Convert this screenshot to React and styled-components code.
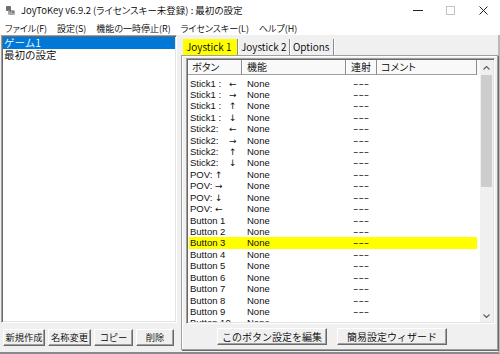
import React from "react"
import styled, { createGlobalStyle } from "styled-components"

const jp = `"Noto Sans CJK JP", "Liberation Sans", sans-serif`
const latin = `"Liberation Sans", "Noto Sans CJK JP", sans-serif`

const GlobalStyle = createGlobalStyle`
  html, body {
    margin: 0;
    padding: 0;
    background: #f0f0f0;
  }
  body {
    font-family: ${jp};
  }
`

const Window = styled.div`
  width: 500px;
  height: 354px;
  display: flex;
  flex-direction: column;
  background: #f0f0f0;
  overflow: hidden;
  font-family: ${jp};
  font-weight: 350;
  color: #000;
`

const TitleBar = styled.div`
  height: 21px;
  flex: none;
  display: flex;
  align-items: center;
  background: #fff;
  padding-left: 5px;
`

const TitleText = styled.div`
  margin-left: 5px;
  font-size: 9.5px;
  line-height: 1;
  font-feature-settings: "palt";
  white-space: nowrap;
`

const WindowControls = styled.div`
  margin-left: auto;
  display: flex;
  height: 100%;
`

const ControlButton = styled.div`
  width: 33px;
  display: flex;
  align-items: center;
  justify-content: center;
`

const MenuBar = styled.div`
  height: 14px;
  flex: none;
  display: flex;
  align-items: center;
  gap: 10px;
  padding-left: 5px;
  background: #fff;
`

const MenuItem = styled.span`
  font-size: 9px;
  line-height: 1;
  font-feature-settings: "palt";
  white-space: nowrap;
`

const Client = styled.div`
  flex: 1;
  display: flex;
  border-right: 2px solid #b9b9b9;
  border-bottom: 2px solid #8a8a8a;
  min-height: 0;
`

const LeftPane = styled.div`
  width: 176px;
  margin-left: 1px;
  display: flex;
  flex-direction: column;
`

const ListBox = styled.div`
  flex: 1;
  background: #fff;
  border: 1px solid;
  border-color: #a0a0a0 #fff #fff #a0a0a0;
  box-shadow: inset 1px 1px 0 #696969, inset -1px -1px 0 #e3e3e3;
  padding: 1px;
`

const ListItem = styled.div`
  height: 11.5px;
  padding-left: 1px;
  font-size: 10.5px;
  line-height: 11.5px;
  white-space: nowrap;
  background: ${p => (p.$selected ? "#0078d7" : "transparent")};
  color: ${p => (p.$selected ? "#fff" : "#000")};
`

const ButtonBar = styled.div`
  height: ${p => p.$h}px;
  flex: none;
  display: flex;
  align-items: center;
  gap: ${p => p.$gap}px;
  padding-left: ${p => p.$pl}px;
`

const PushButton = styled.div`
  width: ${p => p.$w}px;
  height: 17.5px;
  box-sizing: border-box;
  display: flex;
  align-items: center;
  justify-content: center;
  background: #f0f0f0;
  border: 1px solid;
  border-color: #fff #696969 #696969 #fff;
  box-shadow: inset -1px -1px 0 #a0a0a0;
  font-size: ${p => p.$fs}px;
  line-height: 1;
  white-space: nowrap;
`

const RightPane = styled.div`
  flex: 1;
  margin-left: 4px;
  padding: 4px 0 2px;
  display: flex;
  flex-direction: column;
  min-width: 0;
`

const TabStrip = styled.div`
  height: 16px;
  flex: none;
  display: flex;
  padding-left: 2px;
`

const Tab = styled.div`
  width: ${p => p.$w}px;
  box-sizing: border-box;
  padding-left: 3px;
  font-size: 10px;
  line-height: 16px;
  white-space: nowrap;
  background: ${p => (p.$active ? "#ffff00" : "transparent")};
  border-right: 1px solid #8c8c8c;
  box-shadow: 1px 0 0 #fff;
`

const TabPanel = styled.div`
  flex: 1;
  display: flex;
  flex-direction: column;
  border: 1px solid #a0a0a0;
  box-shadow: inset 1px 1px 0 #fff, 1px 1px 0 #696969;
  padding: 2px 2px 0 4px;
  min-height: 0;
`

const ListView = styled.div`
  flex: 1;
  display: flex;
  min-height: 0;
  background: #fff;
  border: 1px solid;
  border-color: #a0a0a0 #fff #fff #a0a0a0;
  box-shadow: inset 1px 1px 0 #696969, inset -1px -1px 0 #e3e3e3;
  padding: 1px;
`

const Table = styled.div`
  flex: 1;
  display: flex;
  flex-direction: column;
  overflow: hidden;
`

const Header = styled.div`
  height: 15px;
  flex: none;
  display: flex;
  background: #f9f9f9;
`

const HeaderCell = styled.div`
  width: ${p => p.$w}px;
  flex: none;
  box-sizing: border-box;
  padding-left: ${p => p.$pl}px;
  font-size: 10px;
  line-height: 14px;
  font-feature-settings: "palt";
  border-right: 1px solid #8c8c8c;
  border-bottom: 1px solid #a0a0a0;
  box-shadow: inset 1px 0 0 #fff;
`

const Rows = styled.div`
  padding: 2.5px 0 0 1px;
`

const Row = styled.div`
  width: 288px;
  height: 11.43px;
  display: flex;
  background: ${p => (p.$hl ? "#ffff00" : "transparent")};
`

const Cell = styled.div`
  width: ${p => p.$w}px;
  flex: none;
  box-sizing: border-box;
  padding-left: ${p => p.$pl}px;
  font-family: ${latin};
  font-weight: 400;
  font-size: 9.5px;
  line-height: 11.43px;
  color: #111;
  white-space: nowrap;
`

const Label = styled.span`
  display: inline-block;
  width: ${p => p.$w}px;
`

const Arrow = styled.span`
  font-family: "DejaVu Sans", sans-serif;
  font-size: 9px;
`

const Dashes = styled.span`
  display: inline-block;
  font-size: 9.5px;
  transform: scaleX(1.7);
  transform-origin: left center;
`

const ScrollBar = styled.div`
  width: 13px;
  flex: none;
  display: flex;
  flex-direction: column;
  background: #f0f0f0;
`

const ScrollArrow = styled.div`
  height: ${p => p.$h}px;
  flex: none;
  display: flex;
  align-items: center;
  justify-content: center;
`

const Thumb = styled.div`
  height: 112px;
  flex: none;
  margin: 0 1px;
  background: #cdcdcd;
`

const Track = styled.div`
  flex: 1;
`

const Chevron = ({ down }) => (
  <svg width="7" height="4" viewBox="0 0 7 4">
    <polyline
      points={down ? "0.5,0.5 3.5,3.5 6.5,0.5" : "0.5,3.5 3.5,0.5 6.5,3.5"}
      fill="none"
      stroke="#606060"
      strokeWidth="1.2"
    />
  </svg>
)

const AppIcon = () => (
  <svg width="11" height="11" viewBox="0 0 11 11">
    <rect x="1" y="1" width="5" height="5" rx="1" fill="#6e6e6e" />
    <rect x="3" y="5" width="7" height="5" rx="1.5" fill="#a8a8a8" />
    <rect x="4.5" y="3" width="1.5" height="4" fill="#6e6e6e" />
    <circle cx="8" cy="7" r="1" fill="#6e6e6e" />
  </svg>
)

const rows = [
  ["Stick1 :", "←", 39],
  ["Stick1 :", "→", 39],
  ["Stick1 :", "↑", 39],
  ["Stick1 :", "↓", 39],
  ["Stick2:", "←", 39],
  ["Stick2:", "→", 39],
  ["Stick2:", "↑", 39],
  ["Stick2:", "↓", 39],
  ["POV:", "↑", 25],
  ["POV:", "→", 25],
  ["POV:", "↓", 25],
  ["POV:", "←", 25],
  ...Array.from({ length: 10 }, (_, i) => [`Button ${i + 1}`]),
]

const columns = [
  { title: "ボタン", w: 54, pl: 4 },
  { title: "機能", w: 104, pl: 5 },
  { title: "連射", w: 31, pl: 5 },
  { title: "コメント", w: 100, pl: 4 },
]

const menus = ["ファイル(F)", "設定(S)", "機能の一時停止(R)", "ライセンスキー(L)", "ヘルプ(H)"]

export default function App() {
  return (
    <>
      <GlobalStyle />
      <Window>
        <TitleBar>
          <AppIcon />
          <TitleText>JoyToKey v6.9.2 (ライセンスキー未登録) : 最初の設定</TitleText>
          <WindowControls>
            <ControlButton>
              <svg width="10" height="1">
                <rect width="10" height="1" fill="#222" />
              </svg>
            </ControlButton>
            <ControlButton>
              <svg width="9" height="9">
                <rect x="0.5" y="0.5" width="8" height="8" fill="none" stroke="#c4c4c4" />
              </svg>
            </ControlButton>
            <ControlButton>
              <svg width="9" height="9">
                <path d="M0.5 0.5 L8.5 8.5 M8.5 0.5 L0.5 8.5" stroke="#222" strokeWidth="1" />
              </svg>
            </ControlButton>
          </WindowControls>
        </TitleBar>
        <MenuBar>
          {menus.map(m => (
            <MenuItem key={m}>{m}</MenuItem>
          ))}
        </MenuBar>
        <Client>
          <LeftPane>
            <ListBox>
              <ListItem $selected>ゲーム1</ListItem>
              <ListItem>最初の設定</ListItem>
            </ListBox>
            <ButtonBar $h={29} $gap={3} $pl={2}>
              <PushButton $w={42} $fs={9.25}>新規作成</PushButton>
              <PushButton $w={43} $fs={9.25}>名称変更</PushButton>
              <PushButton $w={39} $fs={9.25}>コピー</PushButton>
              <PushButton $w={38} $fs={9.25}>削除</PushButton>
            </ButtonBar>
          </LeftPane>
          <RightPane>
            <TabStrip>
              <Tab $w={55} $active>Joystick 1</Tab>
              <Tab $w={52}>Joystick 2</Tab>
              <Tab $w={44}>Options</Tab>
            </TabStrip>
            <TabPanel>
              <ListView>
                <Table>
                  <Header>
                    {columns.map(c => (
                      <HeaderCell key={c.title} $w={c.w} $pl={c.pl}>
                        {c.title}
                      </HeaderCell>
                    ))}
                  </Header>
                  <Rows>
                    {rows.map(([name, dir, w], i) => (
                      <Row key={name + i} $hl={i === 14}>
                        <Cell $w={53} $pl={1}>
                          {dir ? (
                            <>
                              <Label $w={w}>{name}</Label>
                              <Arrow>{dir}</Arrow>
                            </>
                          ) : (
                            name
                          )}
                        </Cell>
                        <Cell $w={104} $pl={5}>None</Cell>
                        <Cell $w={31} $pl={7}>
                          <Dashes>---</Dashes>
                        </Cell>
                        <Cell $w={100} $pl={4} />
                      </Row>
                    ))}
                  </Rows>
                </Table>
                <ScrollBar>
                  <ScrollArrow $h={15}>
                    <Chevron />
                  </ScrollArrow>
                  <Thumb />
                  <Track />
                  <ScrollArrow $h={13}>
                    <Chevron down />
                  </ScrollArrow>
                </ScrollBar>
              </ListView>
              <ButtonBar $h={25} $gap={10} $pl={31}>
                <PushButton $w={110} $fs={10}>このボタン設定を編集</PushButton>
                <PushButton $w={110} $fs={10}>簡易設定ウィザード</PushButton>
              </ButtonBar>
            </TabPanel>
          </RightPane>
        </Client>
      </Window>
    </>
  )
}
